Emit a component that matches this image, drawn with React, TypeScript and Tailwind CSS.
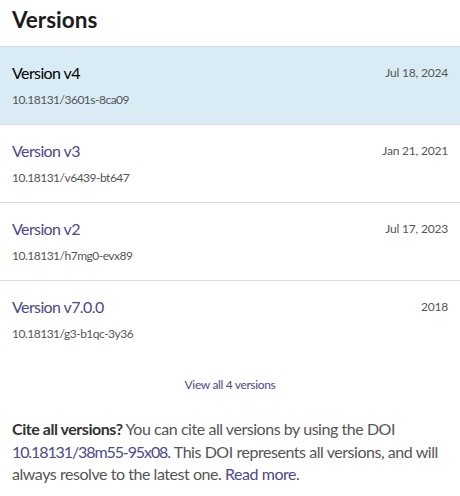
import React from "react";

const versions = [
  { title: "Version v4", doi: "10.18131/3601s-8ca09", date: "Jul 18, 2024", selected: true },
  { title: "Version v3", doi: "10.18131/v6439-bt647", date: "Jan 21, 2021" },
  { title: "Version v2", doi: "10.18131/h7mg0-evx89", date: "Jul 17, 2023" },
  { title: "Version v7.0.0", doi: "10.18131/g3-b1qc-3y36", date: "2018" },
];

export default function App() {
  return (
    <div className="w-[460px] h-[496px] bg-white overflow-hidden" style={{ fontFamily: "Lato, 'Noto Sans', sans-serif" }}>
      <h2 className="px-3 pt-[6px] pb-[12px] text-[22.5px] leading-[28px] font-bold text-[#1b1c1d]">Versions</h2>
      <div className="border-t border-[#dcdcdc]">
        {versions.map((v, i) => (
          <div
            key={i}
            className={
              v.selected
                ? "bg-[#d9ecf5] border-b border-[#dcdcdc] px-3 pt-4 pb-[15px]"
                : "border-b border-[#dcdcdc] px-3 pt-4 pb-[15px] last:border-b-0"
            }
          >
            <div className="flex items-center justify-between h-5">
              <span className={v.selected ? "text-[16px] tracking-[-0.6px] text-black" : "text-[16px] tracking-[-0.6px] text-[#4a4a8a]"}>{v.title}</span>
              <span className="text-[12px] tracking-[-0.2px] text-[#555]">{v.date}</span>
            </div>
            <div className="mt-2 h-[18px] leading-[18px] text-[12px] tracking-[-0.5px] text-[#555]">{v.doi}</div>
          </div>
        ))}
      </div>
      <div className="mt-[18px] text-center text-[12px] tracking-[-0.35px] leading-[18px] text-[#4a4a8a]">View all 4 versions</div>
      <p className="mt-[24px] px-3 text-[16px] leading-[22.5px] tracking-[-0.45px] text-[#555]">
        <b className="text-[#333] font-bold">Cite all versions?</b> You can cite all versions by using the DOI{" "}
        <span className="text-[#4a4a8a] tracking-[-1.1px]">10.18131/38m55-95x08</span>. This DOI represents all versions, and will
        always resolve to the latest one. <span className="text-[#4a4a8a]">Read more</span>.
      </p>
    </div>
  );
}
